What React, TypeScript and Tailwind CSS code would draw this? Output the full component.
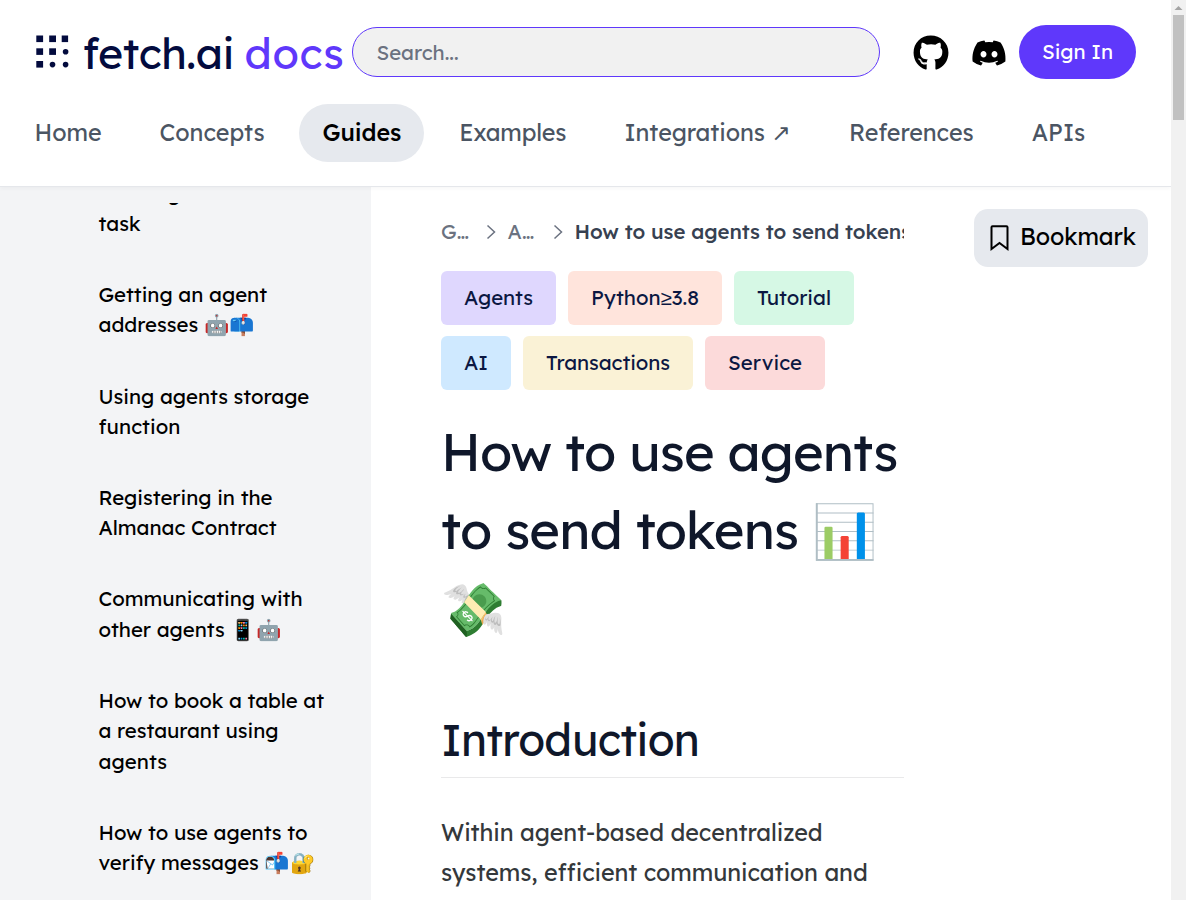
import { type ReactNode, useLayoutEffect, useRef } from "react";
import { FaDiscord, FaGithub } from "react-icons/fa";

type FitProps = { text: ReactNode; width: number; className?: string };

/** One line of text, tracked so that it fills the given width. */
function Fit({ text, width, className = "" }: FitProps) {
  const ref = useRef<HTMLSpanElement>(null);
  useLayoutEffect(() => {
    const el = ref.current;
    if (!el) return;
    el.style.letterSpacing = "0px";
    const natural = el.getBoundingClientRect().width;
    const count = Array.from(el.textContent ?? "").length;
    el.style.letterSpacing = `${(width - natural) / count}px`;
  }, [text, width]);
  return (
    <span ref={ref} className={`inline-block whitespace-pre ${className}`}>
      {text}
    </span>
  );
}

const nav = [
  { id: "home", label: "Home", width: 66.9 },
  { id: "concepts", label: "Concepts", width: 105 },
  { id: "guides", label: "Guides", width: 78.6, active: true },
  { id: "examples", label: "Examples", width: 107.1 },
  {
    id: "integrations",
    label: (
      <>
        Integrations <span className="font-['DejaVu_Sans']">↗</span>
      </>
    ),
    width: 166.5,
  },
  { id: "references", label: "References", width: 124.7 },
  { id: "apis", label: "APIs", width: 53.5 },
];

type Line = { text: string; width: number; emoji?: string };

const sidebar: Line[][] = [
  [{ text: "Creating an interval", width: 188 }, { text: "task", width: 42 }],
  [{ text: "Getting an agent", width: 168.5 }, { text: "addresses ", width: 105.5, emoji: "🤖📫" }],
  [{ text: "Using agents storage", width: 210.8 }, { text: "function", width: 82 }],
  [{ text: "Registering in the", width: 174 }, { text: "Almanac Contract", width: 178 }],
  [{ text: "Communicating with", width: 204 }, { text: "other agents ", width: 132, emoji: "📱🤖" }],
  [
    { text: "How to book a table at", width: 225.5 },
    { text: "a restaurant using", width: 180 },
    { text: "agents", width: 68.5 },
  ],
  [{ text: "How to use agents to", width: 209 }, { text: "verify messages ", width: 166, emoji: "📬🔐" }],
];

const tags = [
  { id: "agents", label: "Agents", width: 69, color: "bg-[#dfd7fe]" },
  {
    id: "python",
    label: (
      <>
        Python<span className="font-['Liberation_Sans']">≥</span>3.8
      </>
    ),
    width: 108,
    color: "bg-[#ffe4dc]",
  },
  { id: "tutorial", label: "Tutorial", width: 74, color: "bg-[#d6f8e5]" },
  { id: "ai", label: "AI", width: 24, color: "bg-[#cfe9ff]" },
  { id: "transactions", label: "Transactions", width: 124, color: "bg-[#faf2d6]" },
  { id: "service", label: "Service", width: 74, color: "bg-[#fcdada]" },
];

function Logo() {
  return (
    <div className="flex h-[54px] w-[316px] items-center text-[43px] leading-[54px]">
      <svg viewBox="0 0 34 34" className="mr-[14px] size-[34px] shrink-0 fill-[#030b3e]">
        <rect x="0.3" y="0.5" width="6.8" height="6.6" />
        <rect x="13.2" y="0.5" width="6.8" height="6.6" />
        <rect x="25.7" y="0.5" width="6.4" height="6.6" />
        <rect x="0.3" y="13.3" width="6.8" height="6.6" />
        <rect x="13.2" y="13.3" width="6.8" height="6.6" />
        <rect x="0.3" y="26" width="6.8" height="6.6" />
        <circle cx="29.6" cy="16.8" r="2.8" />
        <circle cx="16.5" cy="29.6" r="2.8" />
        <circle cx="29.6" cy="29.6" r="2.8" />
      </svg>
      <Fit text="fetch.ai" width={151.5} className="mt-px -ml-[1.5px] mr-[8px] font-normal text-[#030b3e]" />
      <Fit text="docs" width={100} className="mt-px ml-[2.5px] font-normal text-[#5f38fb]" />
    </div>
  );
}

function Header() {
  return (
    <header className="relative z-10 h-[187px] shrink-0 border-b border-[#e5e7eb] bg-white pt-[25px] shadow-[0_2px_4px_rgba(0,0,0,0.03)]">
      <div className="flex h-[54px] items-center pl-[36px]">
        <Logo />
        <div className="flex h-[50px] w-[528px] items-center rounded-full border border-[#5f38fb] bg-[#f1f1f1] px-[23.5px] text-[20.4px] text-[#6b7280]">
          <Fit text="Search..." width={82} className="mt-[2px]" />
        </div>
        <FaGithub className="mt-[2px] ml-[33.4px] size-[36px]" />
        <FaDiscord className="mt-px ml-[22px] size-[36px]" />
        <button className="ml-[11.6px] h-[54px] w-[117px] rounded-full bg-[#5f38fb] text-[20.4px] text-white">
          <Fit text="Sign In" width={71} />
        </button>
      </div>
      <nav className="mt-[25px] flex gap-[11.7px] pl-[11.4px] text-[23.33px]">
        {nav.map((n) => (
          <a
            key={n.id}
            className={`flex h-[58px] items-center rounded-full px-[23.2px] ${
              n.active ? "bg-[#e6e9ee] font-medium text-black" : "text-[#4b5563]"
            }`}
          >
            <Fit text={n.label} width={n.width} />
          </a>
        ))}
      </nav>
    </header>
  );
}

function Sidebar() {
  return (
    <aside className="w-[371px] shrink-0 overflow-hidden bg-[#f3f4f6] pt-[16px]">
      <div className="h-full overflow-hidden">
        <ul className="-mt-[24.4px] flex flex-col gap-[40.8px] pl-[98.5px] text-[20.4px] leading-[30.33px] text-black">
          {sidebar.map((item) => (
            <li key={item[0].text}>
              {item.map((line) => (
                <div key={line.text} className="h-[30.33px] whitespace-nowrap">
                  <Fit text={line.text} width={line.width} />
                  {line.emoji && <span>{line.emoji}</span>}
                </div>
              ))}
            </li>
          ))}
        </ul>
      </div>
    </aside>
  );
}

function Chevron() {
  return (
    <svg viewBox="0 0 20 20" className="size-[20px] shrink-0 fill-none stroke-[#6b7280] stroke-[1.5]">
      <path d="M6.5 3.5 13.5 10l-7 6.5" />
    </svg>
  );
}

function Article() {
  return (
    <main className="ml-[70px] w-[463px] shrink-0 pt-[30px]">
      <div className="flex h-[30px] items-center overflow-hidden text-[20.4px] whitespace-nowrap text-[#6b7280]">
        <Fit text="G…" width={28} className="mr-[12px]" />
        <Chevron />
        <Fit text="A…" width={27} className="mr-[13.5px] ml-[6.5px]" />
        <Chevron />
        <Fit text="How to use agents to send tokens" width={336.5} className="ml-[6.5px] font-medium text-[#374151]" />
      </div>
      <div className="mt-[24px] flex flex-wrap gap-x-[12px] gap-y-[11px] text-[20.4px] text-[#0b1742]">
        {tags.map((t) => (
          <span key={t.id} className={`flex h-[54px] items-center rounded-[6px] px-[23px] ${t.color}`}>
            <Fit text={t.label} width={t.width} />
          </span>
        ))}
      </div>
      <h1 className="mt-[21.5px] text-[52.5px] leading-[78px] text-[#0f172a]">
        <div className="h-[78px] whitespace-nowrap">
          <Fit text="How to use agents" width={456.5} />
        </div>
        <div className="flex h-[78px] whitespace-nowrap">
          <Fit text="to send tokens " width={371} />
          <span className="pt-px">📊</span>
        </div>
        <div className="h-[78px] pt-px">💸</div>
      </h1>
      <h2 className="mt-[62.5px] h-[70px] border-b border-[#e9e9ea] text-[43.75px] leading-[64px] text-[#0f172a]">
        <Fit text="Introduction" width={258} />
      </h2>
      <p className="mt-[35px] text-[23.33px] leading-[40px] whitespace-nowrap text-[#34383b]">
        <Fit text="Within agent-based decentralized" width={381.5} />
        <br />
        <Fit text="systems, efficient communication and" width={426.6} />
      </p>
    </main>
  );
}

function Bookmark() {
  return (
    <button className="mt-[22px] ml-[70px] flex h-[58px] w-[174px] shrink-0 items-center rounded-[14px] bg-[#e6e9ee] pl-[16px] text-[23.33px]">
      <svg viewBox="0 0 19 26" className="mr-[11px] h-[26px] w-[19px] shrink-0 fill-none stroke-black stroke-2">
        <path d="M1.5 24V2.2q0-1 1-1h14q1 0 1 1V24l-8-6z" />
      </svg>
      <Fit text="Bookmark" width={116} className="-mt-px" />
    </button>
  );
}

function Scrollbar() {
  return (
    <div className="flex w-[15px] shrink-0 flex-col items-center bg-[#f1f1f1]">
      <svg viewBox="0 0 15 15" className="size-[15px] fill-[#a3a3a3]">
        <path d="M3.5 10h8l-4-4z" />
      </svg>
      <div className="h-[105px] w-[11px] bg-[#c1c1c1]" />
    </div>
  );
}

export default function App() {
  return (
    <div className="flex h-[900px] w-[1186px] overflow-hidden bg-white font-['Lexend','Inter','Noto_Color_Emoji',sans-serif] [font-feature-settings:'cv11','cv08']">
      <div className="flex w-[1171px] flex-col overflow-hidden">
        <Header />
        <div className="flex min-h-0 flex-1 overflow-hidden">
          <Sidebar />
          <Article />
          <Bookmark />
        </div>
      </div>
      <Scrollbar />
    </div>
  );
}
